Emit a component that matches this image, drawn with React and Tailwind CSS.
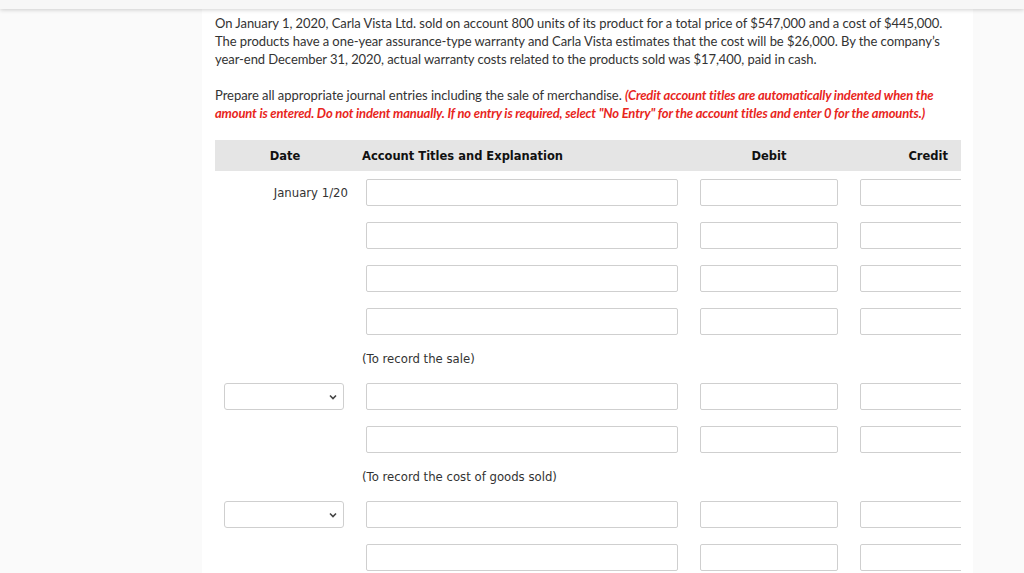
import React from 'react';

const rows = [
  { type: 'entry', date: 'January 1/20' },
  { type: 'entry' },
  { type: 'entry' },
  { type: 'entry' },
  { type: 'note', text: '(To record the sale)' },
  { type: 'entry', select: true },
  { type: 'entry' },
  { type: 'note', text: '(To record the cost of goods sold)' },
  { type: 'entry', select: true },
  { type: 'entry' },
];

function Box({ className }) {
  return <div className={`h-[27px] border border-[#cfcfcf] rounded-[2px] bg-white shrink-0 ${className}`} />;
}

function DateSelect() {
  return (
    <div className="ml-[9px] w-[120px] h-[27px] border border-[#cfcfcf] rounded-[3px] bg-white flex items-center justify-end pr-[6px]">
      <svg width="8" height="6" viewBox="0 0 8 6">
        <path d="M1 1.5 L4 4.5 L7 1.5" fill="none" stroke="#444" strokeWidth="1.6" />
      </svg>
    </div>
  );
}

export default function App() {
  return (
    <div className="h-screen overflow-hidden bg-[#fafafa]">
      <div className="h-[9px] bg-[#f7f7f7] shadow-[0_1px_4px_rgba(0,0,0,0.18)] relative z-10" />
      <div className="ml-[202px] w-[771px] min-h-screen bg-white pl-[13px] pt-[5px] font-['Lato',sans-serif] text-[13px] leading-[18px] text-[#333]">
        <p className="tracking-[-0.06px]">
          On January 1, 2020, Carla Vista Ltd. sold on account 800 units of its product for a total price of $547,000 and a cost of $445,000.
          <br />
          The products have a one-year assurance-type warranty and Carla Vista estimates that the cost will be $26,000. By the company’s
          <br />
          year-end December 31, 2020, actual warranty costs related to the products sold was $17,400, paid in cash.
        </p>
        <p className="mt-[18px] tracking-[-0.04px]">
          Prepare all appropriate journal entries including the sale of merchandise.{' '}
          <span className="text-[#e8251c] font-bold italic tracking-[-0.15px]">
            (Credit account titles are automatically indented when the
            <br />
            amount is entered. Do not indent manually. If no entry is required, select "No Entry" for the account titles and enter 0 for the amounts.)
          </span>
        </p>

        <div className="mt-[18px] w-[746px] overflow-hidden font-['DejaVu_Sans',sans-serif] text-[11.7px] text-[#333]">
          <div className="h-[31px] bg-[#e5e5e5] flex items-center font-bold text-[11.5px] text-[#111]">
            <div className="w-[140px] text-center">Date</div>
            <div className="w-[334px] pl-[7px]">Account Titles and Explanation</div>
            <div className="w-[160px] text-center">Debit</div>
            <div className="flex-1 text-right pr-[13px]">Credit</div>
          </div>
          {rows.map((r, i) =>
            r.type === 'note' ? (
              <div key={i} className="h-[32px] flex items-center">
                <div className="w-[140px]" />
                <div className="pl-[7px]">{r.text}</div>
              </div>
            ) : (
              <div key={i} className="h-[43px] flex items-center">
                <div className="w-[140px] shrink-0 flex items-center justify-end">
                  {r.select ? <div className="w-full"><DateSelect /></div> : <span className="pr-[7px]">{r.date}</span>}
                </div>
                <div className="w-[334px] shrink-0">
                  <Box className="ml-[11px] w-[312px]" />
                </div>
                <div className="w-[160px] shrink-0">
                  <Box className="ml-[11px] w-[138px]" />
                </div>
                <div className="flex-1 overflow-hidden">
                  <Box className="ml-[11px] w-[138px]" />
                </div>
              </div>
            )
          )}
        </div>
      </div>
    </div>
  );
}
